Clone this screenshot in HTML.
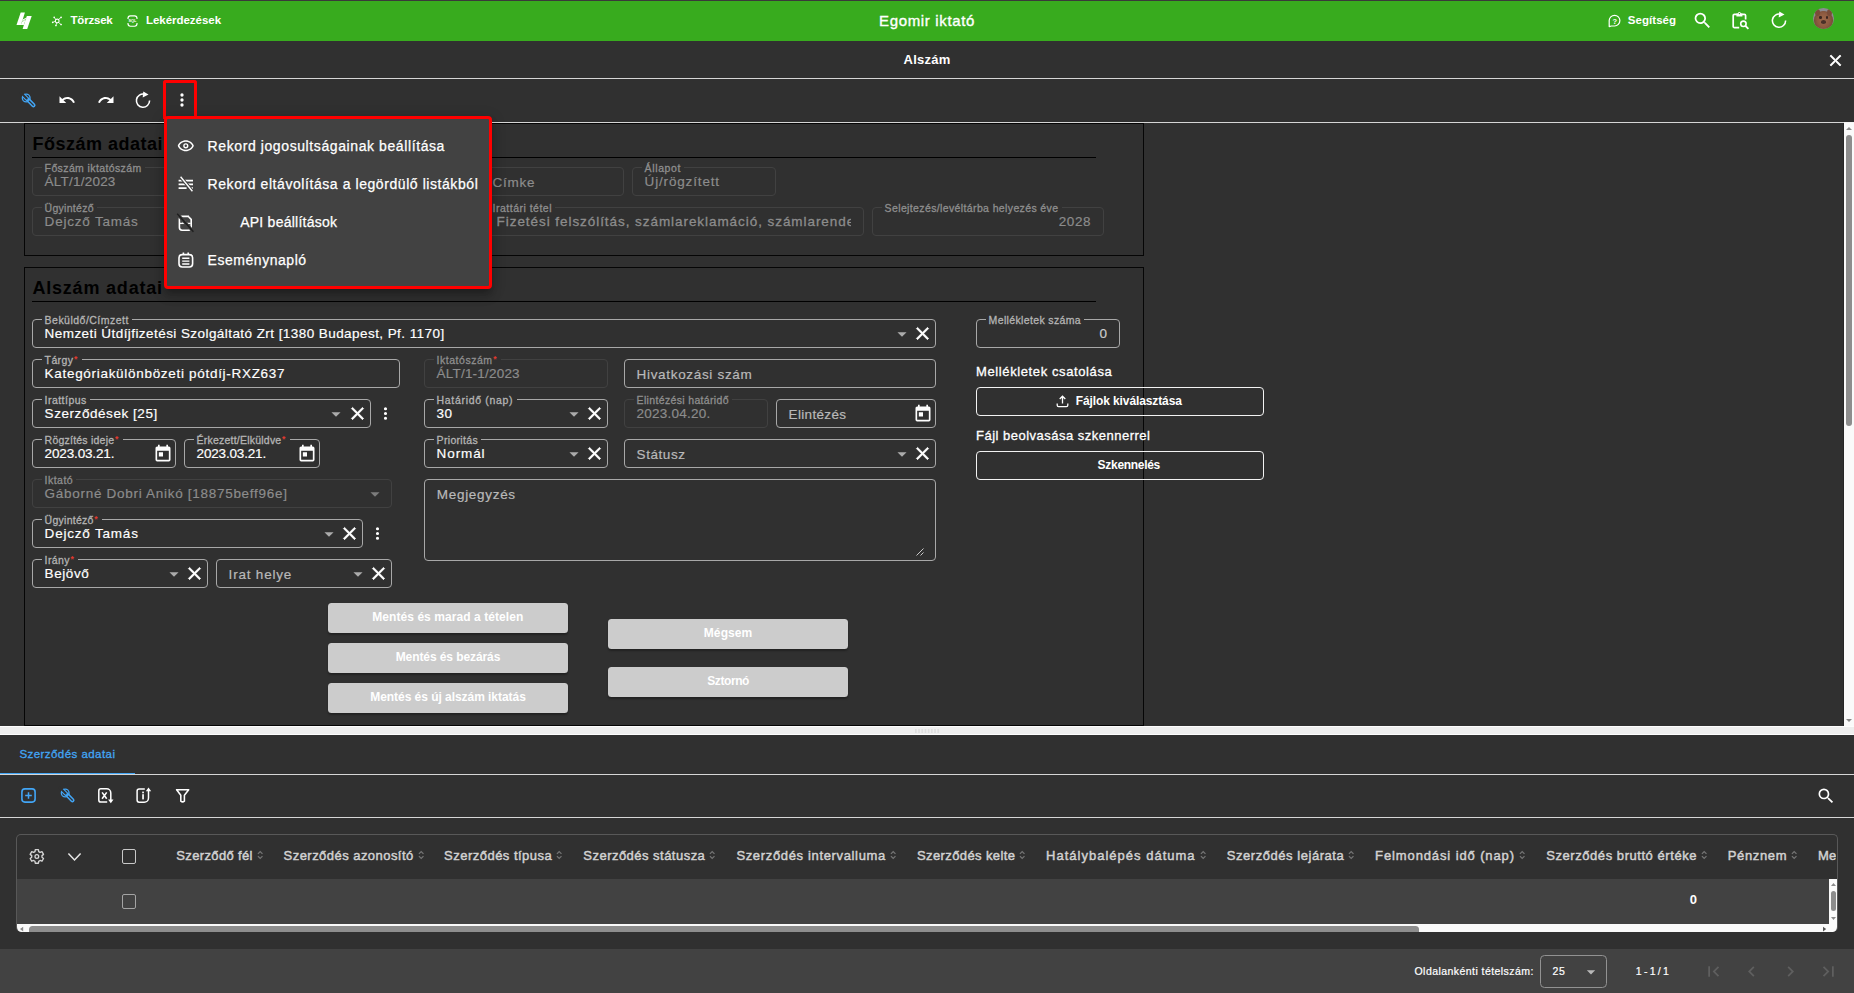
<!DOCTYPE html>
<html lang="hu"><head><meta charset="utf-8"><title>Egomir iktató</title>
<style>
html,body{margin:0;padding:0;}
body{width:1854px;height:993px;overflow:hidden;background:#303030;position:relative;font-family:"Liberation Sans",sans-serif;}
.t{position:absolute;white-space:nowrap;}
.f{position:absolute;box-sizing:border-box;border:1px solid #a8a8a8;border-radius:4px;}
.f.d{border-color:#414141;}
.btn{position:absolute;background:#cccccc;border-radius:3.5px;box-shadow:0 2px 2px rgba(0,0,0,.3);}
.ob{position:absolute;box-sizing:border-box;border:1px solid #f2f2f2;border-radius:4px;}
svg{overflow:visible}
</style></head><body>

<div style="position:absolute;left:0px;top:0px;width:1854px;height:1px;background:#3a3a3a"></div>
<div style="position:absolute;left:0px;top:1px;width:1854px;height:40px;background:#38ab1e"></div>
<svg style="position:absolute;left:0px;top:0px" width="40" height="40" viewBox="0 0 40 40"><path d="M20.7,12.5H24.9L21,25H16.5Z" fill="#fff"/><path d="M26.8,15.9H31.7L27.2,28.9H22.6Z" fill="#fff"/><path d="M22.7,19.4L26.4,17.4L23.8,25H20.9Z" fill="#fff"/><path d="M26.2,18.9L21.6,22" stroke="#38ab1e" stroke-width="0.5" opacity="0.8" fill="none"/></svg>
<svg style="position:absolute;left:50px;top:14px" width="14" height="14" viewBox="50 14 14 14"><circle cx="57.2" cy="21" r="1.9" fill="none" stroke="#fff" stroke-width="1.1"/><path d="M55.9,19.6L54.2,17.4M58.5,19.6L61,17.4M55.3,21.3L52.8,22.3M56.6,22.8L56,25.4M58.5,22.4L61,24.5" stroke="#fff" stroke-width="0.8" fill="none"/><circle cx="54.2" cy="17.3" r="0.85" fill="#fff"/><circle cx="61.1" cy="17.3" r="0.85" fill="#fff"/><circle cx="52.7" cy="22.3" r="0.85" fill="#fff"/><circle cx="55.95" cy="25.5" r="0.85" fill="#fff"/><circle cx="61.1" cy="24.5" r="0.85" fill="#fff"/></svg>
<div class="t" style="top:11.50px;font-size:11.5px;line-height:17px;color:#ffffff;left:70.50px;font-weight:700;letter-spacing:-0.208px;">Törzsek</div>
<svg style="position:absolute;left:127px;top:15px" width="11" height="12" viewBox="0 0 11 12"><path d="M1,4V3.2C1,1.9 2.1,0.8 3.4,0.8H7.6C8.9,0.8 10,1.9 10,3.2V4M1,8V8.8C1,10.1 2.1,11.2 3.4,11.2H7.6C8.9,11.2 10,10.1 10,8.8V8" fill="none" stroke="#fff" stroke-width="1.15"/><text x="5.5" y="7.4" font-size="3.9" font-weight="700" fill="#fff" text-anchor="middle" font-family="Liberation Sans, sans-serif">SQL</text></svg>
<div class="t" style="top:11.50px;font-size:11.5px;line-height:17px;color:#ffffff;left:146.00px;font-weight:700;letter-spacing:-0.036px;">Lekérdezések</div>
<div class="t" style="top:10.00px;font-size:15px;line-height:22px;color:#ffffff;left:879.00px;letter-spacing:0.652px;-webkit-text-stroke:0.35px #ffffff;">Egomir iktató</div>
<svg style="position:absolute;left:1608px;top:14px" width="13" height="14" viewBox="0 0 13 14"><path d="M1.2,12.6V6.6C1.2,3.6 3.6,1.3 6.6,1.3C9.5,1.3 11.9,3.6 11.9,6.6C11.9,9.6 9.5,12 6.6,12H3.4Z" fill="none" stroke="#fff" stroke-width="1.2" stroke-linejoin="round"/><text x="6.7" y="9.6" font-size="7.5" font-weight="700" fill="#fff" text-anchor="middle" font-family="Liberation Sans, sans-serif">?</text></svg>
<div class="t" style="top:11.50px;font-size:11.5px;line-height:17px;color:#ffffff;left:1627.70px;font-weight:700;letter-spacing:0.071px;">Segítség</div>
<svg style="position:absolute;left:1692px;top:10px" width="21" height="21" viewBox="0 0 24 24"><path d="M9.5,3A6.5,6.5 0 0,1 16,9.5C16,11.11 15.41,12.59 14.44,13.73L14.71,14H15.5L20.5,19L19,20.5L14,15.5V14.71L13.73,14.44C12.59,15.41 11.11,16 9.5,16A6.5,6.5 0 0,1 3,9.5A6.5,6.5 0 0,1 9.5,3M9.5,5C7,5 5,7 5,9.5C5,12 7,14 9.5,14C12,14 14,12 14,9.5C14,7 12,5 9.5,5Z" fill="#fff" /></svg>
<svg style="position:absolute;left:1731px;top:11px" width="19" height="19" viewBox="0 0 19 19"><path d="M8.2,16.6H3.4C2.7,16.6 2.2,16.1 2.2,15.4V4.6C2.2,3.9 2.7,3.4 3.4,3.4H13.4C14.1,3.4 14.6,3.9 14.6,4.6V8.4" fill="none" stroke="#fff" stroke-width="1.7"/><path d="M5.4,5.4V2.6H6.9C7,1.6 7.6,1 8.4,1C9.2,1 9.8,1.6 9.9,2.6H11.4V5.4Z" fill="#fff"/><circle cx="8.4" cy="2.5" r="0.7" fill="#38ab1e"/><circle cx="12.4" cy="12.8" r="2.7" fill="none" stroke="#fff" stroke-width="1.6"/><path d="M14.4,14.8L17.4,17.8" stroke="#fff" stroke-width="1.8"/></svg>
<svg style="position:absolute;left:1770.6px;top:11.4px" width="17.0" height="18.0" viewBox="0 0 17 18"><path d="M14.6,9.6A6.6,6.6 0 1 1 9.7,3.25" fill="none" stroke="#fff" stroke-width="1.55"/><path d="M8.3,0.5L13.5,3.5L7.7,6.5Z" fill="#fff"/></svg>
<div style="position:absolute;left:1813px;top:8px;width:21px;height:21px;border-radius:50%;overflow:hidden;background:#8d8b92"><div style="position:absolute;left:1px;top:3px;width:19px;height:20px;border-radius:45% 45% 50% 50%;background:radial-gradient(ellipse at 50% 45%,#a06a4c 0,#8d5a40 45%,#6e4736 80%,#5c3d30 100%)"></div><div style="position:absolute;left:2px;top:1px;width:5px;height:7px;border-radius:50%;background:#7a4c39"></div><div style="position:absolute;left:14px;top:1px;width:5px;height:7px;border-radius:50%;background:#7a4c39"></div><div style="position:absolute;left:6px;top:8px;width:2.5px;height:2.5px;border-radius:50%;background:#3a2620"></div><div style="position:absolute;left:12.5px;top:8px;width:2.5px;height:2.5px;border-radius:50%;background:#3a2620"></div><div style="position:absolute;left:8px;top:12px;width:5px;height:3.5px;border-radius:50%;background:#4a3028"></div></div>
<div class="t" style="top:49.50px;font-size:13px;line-height:20px;color:#ffffff;left:903.50px;font-weight:700;letter-spacing:0.247px;">Alszám</div>
<svg style="position:absolute;left:1825.5px;top:50.5px" width="19" height="19" viewBox="0 0 24 24"><path d="M19,6.41L17.59,5L12,10.59L6.41,5L5,6.41L10.59,12L5,17.59L6.41,19L12,13.41L17.59,19L19,17.59L13.41,12L19,6.41Z" fill="#fff" stroke="#fff" stroke-width="0.9"/></svg>
<div style="position:absolute;left:0px;top:78px;width:1854px;height:1px;background:#d6d6d6"></div>
<svg style="position:absolute;left:18px;top:90px" width="22" height="22" viewBox="18 90 22 22"><defs><clipPath id="wc1"><circle cx="26.2" cy="98" r="4.55"/></clipPath></defs><circle cx="26.2" cy="98" r="3.85" fill="none" stroke="#42a5f5" stroke-width="1.35"/><line x1="28.3" y1="100.1" x2="33.4" y2="105.2" stroke="#42a5f5" stroke-width="4.3" stroke-linecap="round"/><line x1="29.3" y1="101.1" x2="33.4" y2="105.2" stroke="#303030" stroke-width="1.25" stroke-linecap="round"/><g clip-path="url(#wc1)"><line x1="26.9" y1="98.7" x2="21" y2="92.8" stroke="#42a5f5" stroke-width="4.3" stroke-linecap="round"/></g><line x1="26.7" y1="98.5" x2="20.4" y2="92.2" stroke="#303030" stroke-width="2.0" stroke-linecap="round"/></svg>
<svg style="position:absolute;left:58.2px;top:91.25px" width="18" height="18" viewBox="0 0 24 24"><path d="M12.5,8C9.85,8 7.45,9 5.6,10.6L2,7V16H11L7.38,12.38C8.77,11.22 10.54,10.5 12.5,10.5C16.04,10.5 19.05,12.81 20.1,16L22.47,15.22C21.08,11.03 17.15,8 12.5,8Z" fill="#fff" /></svg>
<svg style="position:absolute;left:96.9px;top:91.25px" width="18" height="18" viewBox="0 0 24 24"><path d="M18.4,10.6C16.55,9 14.15,8 11.5,8C6.85,8 2.92,11.03 1.54,15.22L3.9,16C4.95,12.81 7.95,10.5 11.5,10.5C13.45,10.5 15.23,11.22 16.62,12.38L13,16H22V7L18.4,10.6Z" fill="#fff" /></svg>
<svg style="position:absolute;left:135px;top:91px" width="17.0" height="18.0" viewBox="0 0 17 18"><path d="M14.6,9.6A6.6,6.6 0 1 1 9.7,3.25" fill="none" stroke="#fff" stroke-width="1.55"/><path d="M8.3,0.5L13.5,3.5L7.7,6.5Z" fill="#fff"/></svg>
<svg style="position:absolute;left:172px;top:90px" width="20" height="20" viewBox="0 0 24 24"><path d="M12,16A2,2 0 0,1 14,18A2,2 0 0,1 12,20A2,2 0 0,1 10,18A2,2 0 0,1 12,16M12,10A2,2 0 0,1 14,12A2,2 0 0,1 12,14A2,2 0 0,1 10,12A2,2 0 0,1 12,10M12,4A2,2 0 0,1 14,6A2,2 0 0,1 12,8A2,2 0 0,1 10,6A2,2 0 0,1 12,4Z" fill="#fff" /></svg>
<div style="position:absolute;left:0px;top:122px;width:1844px;height:1px;background:#d6d6d6"></div>
<div style="position:absolute;left:1844px;top:122px;width:10px;height:1px;background:#f4f4f4"></div>
<div style="position:absolute;left:1843px;top:123px;width:1px;height:603px;background:#262626"></div>
<div style="position:absolute;left:1844px;top:123px;width:10px;height:603px;background:#fafafa"></div>
<svg style="position:absolute;left:1846px;top:127px" width="6" height="3" viewBox="0 0 6 3"><path d="M0,3L3,0L6,3Z" fill="#8a8a8a"/></svg>
<svg style="position:absolute;left:1846px;top:719px" width="6" height="3" viewBox="0 0 6 3"><path d="M0,0L3,3L6,0Z" fill="#8a8a8a"/></svg>
<div style="position:absolute;left:1846px;top:135px;width:6px;height:291px;background:#8d8d8d;border-radius:3px"></div>
<div style="position:absolute;left:24px;top:123px;width:1120px;height:133px;box-sizing:border-box;border:1px solid #050505"></div>
<div class="t" style="top:131.40px;font-size:18px;line-height:27px;color:#000;left:32.40px;font-weight:700;letter-spacing:0.498px;">Főszám adatai</div>
<div style="position:absolute;left:32px;top:157px;width:1064px;height:1px;background:#000"></div>
<div class="f d" style="left:32px;top:167px;width:144px;height:29px"></div>
<div style="position:absolute;left:41.5px;top:167px;width:103px;height:1px;background:#303030"></div>
<div class="t" style="top:160.10px;font-size:10.5px;line-height:16px;color:#8e8e8e;left:44.60px;letter-spacing:0.386px;-webkit-text-stroke:0.3px #8e8e8e;">Főszám iktatószám</div>
<div class="t" style="top:172.40px;font-size:13.5px;line-height:20px;color:#8c8c8c;left:44.60px;letter-spacing:0.221px;-webkit-text-stroke:0.18px #8c8c8c;">ÁLT/1/2023</div>
<div class="f d" style="left:480px;top:167px;width:144px;height:29px"></div>
<div class="t" style="top:173.30px;font-size:13.5px;line-height:20px;color:#8c8c8c;left:492.60px;letter-spacing:0.700px;-webkit-text-stroke:0.2px #8c8c8c;">Címke</div>
<div class="f d" style="left:632px;top:167px;width:144px;height:29px"></div>
<div style="position:absolute;left:641.5px;top:167px;width:42px;height:1px;background:#303030"></div>
<div class="t" style="top:160.10px;font-size:10.5px;line-height:16px;color:#8e8e8e;left:644.60px;letter-spacing:0.628px;-webkit-text-stroke:0.3px #8e8e8e;">Állapot</div>
<div class="t" style="top:172.40px;font-size:13.5px;line-height:20px;color:#8c8c8c;left:644.60px;letter-spacing:0.836px;-webkit-text-stroke:0.18px #8c8c8c;">Új/rögzített</div>
<div class="f d" style="left:32px;top:207px;width:440px;height:29px"></div>
<div style="position:absolute;left:41.5px;top:207px;width:55px;height:1px;background:#303030"></div>
<div class="t" style="top:200.10px;font-size:10.5px;line-height:16px;color:#8e8e8e;left:44.60px;letter-spacing:0.279px;-webkit-text-stroke:0.3px #8e8e8e;">Ügyintéző</div>
<div class="t" style="top:212.40px;font-size:13.5px;line-height:20px;color:#8c8c8c;left:44.60px;letter-spacing:0.789px;-webkit-text-stroke:0.18px #8c8c8c;">Dejcző Tamás</div>
<div class="f d" style="left:480px;top:207px;width:384px;height:29px"></div>
<div style="position:absolute;left:489.5px;top:207px;width:65px;height:1px;background:#303030"></div>
<div class="t" style="top:200.10px;font-size:10.5px;line-height:16px;color:#8e8e8e;left:492.60px;letter-spacing:0.492px;-webkit-text-stroke:0.3px #8e8e8e;">Irattári tétel</div>
<div class="t" style="left:496.6px;top:212.4px;width:354.5px;overflow:hidden;font-size:13.5px;line-height:20px;color:#8c8c8c;letter-spacing:.94px;-webkit-text-stroke:.3px #8c8c8c">Fizetési felszólítás, számlareklamáció, számlarendezés</div>
<div class="f d" style="left:872px;top:207px;width:232px;height:29px"></div>
<div style="position:absolute;left:881.5px;top:207px;width:180px;height:1px;background:#303030"></div>
<div class="t" style="top:200.10px;font-size:10.5px;line-height:16px;color:#8e8e8e;left:884.60px;letter-spacing:0.374px;-webkit-text-stroke:0.3px #8e8e8e;">Selejtezés/levéltárba helyezés éve</div>
<div class="t" style="top:212.40px;font-size:13.5px;line-height:20px;color:#8c8c8c;left:1058.80px;letter-spacing:0.543px;-webkit-text-stroke:0.18px #8c8c8c;">2028</div>
<div style="position:absolute;left:24px;top:267px;width:1120px;height:459px;box-sizing:border-box;border:1px solid #050505"></div>
<div class="t" style="top:275.30px;font-size:18px;line-height:27px;color:#000;left:32.40px;font-weight:700;letter-spacing:0.804px;">Alszám adatai</div>
<div style="position:absolute;left:32px;top:301px;width:1064px;height:1px;background:#000"></div>
<div class="f" style="left:32px;top:319px;width:904px;height:29px"></div>
<div style="position:absolute;left:41.5px;top:319px;width:90px;height:1px;background:#303030"></div>
<div class="t" style="top:312.10px;font-size:10.5px;line-height:16px;color:#b4b4b4;left:44.60px;letter-spacing:0.478px;-webkit-text-stroke:0.3px #b4b4b4;">Beküldő/Címzett</div>
<div class="t" style="top:324.40px;font-size:13.5px;line-height:20px;color:#ffffff;left:44.60px;letter-spacing:0.434px;-webkit-text-stroke:0.18px #ffffff;">Nemzeti Útdíjfizetési Szolgáltató Zrt [1380 Budapest, Pf. 1170]</div>
<svg style="position:absolute;left:891px;top:322.9px" width="22" height="22" viewBox="0 0 24 24"><path d="M7,10L12,15L17,10H7Z" fill="#ababab" /></svg>
<svg style="position:absolute;left:911.5px;top:323.1px" width="21" height="21" viewBox="0 0 24 24"><path d="M19,6.41L17.59,5L12,10.59L6.41,5L5,6.41L10.59,12L5,17.59L6.41,19L12,13.41L17.59,19L19,17.59L13.41,12L19,6.41Z" fill="#ffffff" stroke="#fff" stroke-width="0.8"/></svg>
<div class="f" style="left:976px;top:319px;width:144px;height:29px"></div>
<div style="position:absolute;left:985.5px;top:319px;width:98px;height:1px;background:#303030"></div>
<div class="t" style="top:312.10px;font-size:10.5px;line-height:16px;color:#b4b4b4;left:988.60px;letter-spacing:0.355px;-webkit-text-stroke:0.3px #b4b4b4;">Mellékletek száma</div>
<div class="t" style="top:324.40px;font-size:13.5px;line-height:20px;color:#cdcdcd;left:1099.49px;-webkit-text-stroke:0.18px #cdcdcd;">0</div>
<div class="f" style="left:32px;top:359px;width:368px;height:29px"></div>
<div style="position:absolute;left:41.5px;top:359px;width:40px;height:1px;background:#303030"></div>
<div class="t" style="top:352.10px;font-size:10.5px;line-height:16px;color:#b4b4b4;left:44.60px;letter-spacing:0.373px;-webkit-text-stroke:0.3px #b4b4b4;">Tárgy</div>
<div class="t" style="top:352.60px;font-size:8.5px;line-height:13px;color:#e0392f;left:73.90px;font-weight:700;">*</div>
<div class="t" style="top:364.40px;font-size:13.5px;line-height:20px;color:#ffffff;left:44.60px;letter-spacing:0.698px;-webkit-text-stroke:0.18px #ffffff;">Kategóriakülönbözeti pótdíj-RXZ637</div>
<div class="f d" style="left:424px;top:359px;width:184px;height:29px"></div>
<div style="position:absolute;left:433.5px;top:359px;width:67px;height:1px;background:#303030"></div>
<div class="t" style="top:352.10px;font-size:10.5px;line-height:16px;color:#8e8e8e;left:436.60px;letter-spacing:0.524px;-webkit-text-stroke:0.3px #8e8e8e;">Iktatószám</div>
<div class="t" style="top:352.60px;font-size:8.5px;line-height:13px;color:#e0392f;left:493.20px;font-weight:700;">*</div>
<div class="t" style="top:364.40px;font-size:13.5px;line-height:20px;color:#8c8c8c;left:436.60px;letter-spacing:0.200px;-webkit-text-stroke:0.18px #8c8c8c;">ÁLT/1-1/2023</div>
<div class="f" style="left:624px;top:359px;width:312px;height:29px"></div>
<div class="t" style="top:365.30px;font-size:13.5px;line-height:20px;color:#b9b9b9;left:636.60px;letter-spacing:0.674px;-webkit-text-stroke:0.2px #b9b9b9;">Hivatkozási szám</div>
<div class="f" style="left:32px;top:399px;width:339px;height:29px"></div>
<div style="position:absolute;left:41.5px;top:399px;width:48px;height:1px;background:#303030"></div>
<div class="t" style="top:392.10px;font-size:10.5px;line-height:16px;color:#b4b4b4;left:44.60px;letter-spacing:0.463px;-webkit-text-stroke:0.3px #b4b4b4;">Irattípus</div>
<div class="t" style="top:404.40px;font-size:13.5px;line-height:20px;color:#ffffff;left:44.60px;letter-spacing:0.556px;-webkit-text-stroke:0.18px #ffffff;">Szerződések [25]</div>
<svg style="position:absolute;left:325px;top:402.9px" width="22" height="22" viewBox="0 0 24 24"><path d="M7,10L12,15L17,10H7Z" fill="#ababab" /></svg>
<svg style="position:absolute;left:346.5px;top:403.1px" width="21" height="21" viewBox="0 0 24 24"><path d="M19,6.41L17.59,5L12,10.59L6.41,5L5,6.41L10.59,12L5,17.59L6.41,19L12,13.41L17.59,19L19,17.59L13.41,12L19,6.41Z" fill="#ffffff" stroke="#fff" stroke-width="0.8"/></svg>
<svg style="position:absolute;left:376.0px;top:404.0px" width="19" height="19" viewBox="0 0 24 24"><path d="M12,16A2,2 0 0,1 14,18A2,2 0 0,1 12,20A2,2 0 0,1 10,18A2,2 0 0,1 12,16M12,10A2,2 0 0,1 14,12A2,2 0 0,1 12,14A2,2 0 0,1 10,12A2,2 0 0,1 12,10M12,4A2,2 0 0,1 14,6A2,2 0 0,1 12,8A2,2 0 0,1 10,6A2,2 0 0,1 12,4Z" fill="#ffffff" /></svg>
<div class="f" style="left:424px;top:399px;width:184px;height:29px"></div>
<div style="position:absolute;left:433.5px;top:399px;width:83px;height:1px;background:#303030"></div>
<div class="t" style="top:392.10px;font-size:10.5px;line-height:16px;color:#b4b4b4;left:436.60px;letter-spacing:0.678px;-webkit-text-stroke:0.3px #b4b4b4;">Határidő (nap)</div>
<div class="t" style="top:404.40px;font-size:13.5px;line-height:20px;color:#ffffff;left:436.60px;letter-spacing:0.493px;-webkit-text-stroke:0.18px #ffffff;">30</div>
<svg style="position:absolute;left:562.8px;top:402.9px" width="22" height="22" viewBox="0 0 24 24"><path d="M7,10L12,15L17,10H7Z" fill="#ababab" /></svg>
<svg style="position:absolute;left:583.5px;top:403.1px" width="21" height="21" viewBox="0 0 24 24"><path d="M19,6.41L17.59,5L12,10.59L6.41,5L5,6.41L10.59,12L5,17.59L6.41,19L12,13.41L17.59,19L19,17.59L13.41,12L19,6.41Z" fill="#ffffff" stroke="#fff" stroke-width="0.8"/></svg>
<div class="f d" style="left:624px;top:399px;width:144px;height:29px"></div>
<div style="position:absolute;left:633.5px;top:399px;width:98px;height:1px;background:#303030"></div>
<div class="t" style="top:392.10px;font-size:10.5px;line-height:16px;color:#8e8e8e;left:636.60px;letter-spacing:0.342px;-webkit-text-stroke:0.3px #8e8e8e;">Elintézési határidő</div>
<div class="t" style="top:404.40px;font-size:13.5px;line-height:20px;color:#8c8c8c;left:636.60px;letter-spacing:0.226px;-webkit-text-stroke:0.18px #8c8c8c;">2023.04.20.</div>
<div class="f" style="left:776px;top:399px;width:160px;height:29px"></div>
<div class="t" style="top:405.30px;font-size:13.5px;line-height:20px;color:#b9b9b9;left:788.60px;letter-spacing:0.325px;-webkit-text-stroke:0.2px #b9b9b9;">Elintézés</div>
<svg style="position:absolute;left:912.7px;top:403.90000000000003px" width="20" height="20" viewBox="0 0 24 24"><path d="M7,10H12V15H7M19,19H5V8H19M19,3H18V1H16V3H8V1H6V3H5C3.89,3 3,3.9 3,5V19A2,2 0 0,0 5,21H19A2,2 0 0,0 21,19V5A2,2 0 0,0 19,3Z" fill="#ffffff" /></svg>
<div class="f" style="left:32px;top:439px;width:144px;height:29px"></div>
<div style="position:absolute;left:41.5px;top:439px;width:81px;height:1px;background:#303030"></div>
<div class="t" style="top:432.10px;font-size:10.5px;line-height:16px;color:#b4b4b4;left:44.60px;letter-spacing:0.226px;-webkit-text-stroke:0.3px #b4b4b4;">Rögzítés ideje</div>
<div class="t" style="top:432.60px;font-size:8.5px;line-height:13px;color:#e0392f;left:114.90px;font-weight:700;">*</div>
<div class="t" style="top:444.40px;font-size:13.5px;line-height:20px;color:#ffffff;left:44.60px;letter-spacing:-0.146px;-webkit-text-stroke:0.18px #ffffff;">2023.03.21.</div>
<svg style="position:absolute;left:152.6px;top:443.90000000000003px" width="20" height="20" viewBox="0 0 24 24"><path d="M7,10H12V15H7M19,19H5V8H19M19,3H18V1H16V3H8V1H6V3H5C3.89,3 3,3.9 3,5V19A2,2 0 0,0 5,21H19A2,2 0 0,0 21,19V5A2,2 0 0,0 19,3Z" fill="#ffffff" /></svg>
<div class="f" style="left:184px;top:439px;width:136px;height:29px"></div>
<div style="position:absolute;left:193.5px;top:439px;width:96px;height:1px;background:#303030"></div>
<div class="t" style="top:432.10px;font-size:10.5px;line-height:16px;color:#b4b4b4;left:196.60px;letter-spacing:0.217px;-webkit-text-stroke:0.3px #b4b4b4;">Érkezett/Elküldve</div>
<div class="t" style="top:432.60px;font-size:8.5px;line-height:13px;color:#e0392f;left:282.00px;font-weight:700;">*</div>
<div class="t" style="top:444.40px;font-size:13.5px;line-height:20px;color:#ffffff;left:196.60px;letter-spacing:-0.174px;-webkit-text-stroke:0.18px #ffffff;">2023.03.21.</div>
<svg style="position:absolute;left:296.6px;top:443.90000000000003px" width="20" height="20" viewBox="0 0 24 24"><path d="M7,10H12V15H7M19,19H5V8H19M19,3H18V1H16V3H8V1H6V3H5C3.89,3 3,3.9 3,5V19A2,2 0 0,0 5,21H19A2,2 0 0,0 21,19V5A2,2 0 0,0 19,3Z" fill="#ffffff" /></svg>
<div class="f" style="left:424px;top:439px;width:184px;height:29px"></div>
<div style="position:absolute;left:433.5px;top:439px;width:47px;height:1px;background:#303030"></div>
<div class="t" style="top:432.10px;font-size:10.5px;line-height:16px;color:#b4b4b4;left:436.60px;letter-spacing:0.321px;-webkit-text-stroke:0.3px #b4b4b4;">Prioritás</div>
<div class="t" style="top:444.40px;font-size:13.5px;line-height:20px;color:#ffffff;left:436.60px;letter-spacing:0.899px;-webkit-text-stroke:0.18px #ffffff;">Normál</div>
<svg style="position:absolute;left:562.8px;top:442.9px" width="22" height="22" viewBox="0 0 24 24"><path d="M7,10L12,15L17,10H7Z" fill="#ababab" /></svg>
<svg style="position:absolute;left:583.5px;top:443.1px" width="21" height="21" viewBox="0 0 24 24"><path d="M19,6.41L17.59,5L12,10.59L6.41,5L5,6.41L10.59,12L5,17.59L6.41,19L12,13.41L17.59,19L19,17.59L13.41,12L19,6.41Z" fill="#ffffff" stroke="#fff" stroke-width="0.8"/></svg>
<div class="f" style="left:624px;top:439px;width:312px;height:29px"></div>
<div class="t" style="top:445.30px;font-size:13.5px;line-height:20px;color:#b9b9b9;left:636.60px;letter-spacing:0.554px;-webkit-text-stroke:0.2px #b9b9b9;">Státusz</div>
<svg style="position:absolute;left:891px;top:442.9px" width="22" height="22" viewBox="0 0 24 24"><path d="M7,10L12,15L17,10H7Z" fill="#ababab" /></svg>
<svg style="position:absolute;left:911.5px;top:443.1px" width="21" height="21" viewBox="0 0 24 24"><path d="M19,6.41L17.59,5L12,10.59L6.41,5L5,6.41L10.59,12L5,17.59L6.41,19L12,13.41L17.59,19L19,17.59L13.41,12L19,6.41Z" fill="#ffffff" stroke="#fff" stroke-width="0.8"/></svg>
<div class="f d" style="left:32px;top:479px;width:360px;height:29px"></div>
<div style="position:absolute;left:41.5px;top:479px;width:34px;height:1px;background:#303030"></div>
<div class="t" style="top:472.10px;font-size:10.5px;line-height:16px;color:#8e8e8e;left:44.60px;letter-spacing:0.470px;-webkit-text-stroke:0.3px #8e8e8e;">Iktató</div>
<div class="t" style="top:484.40px;font-size:13.5px;line-height:20px;color:#8c8c8c;left:44.60px;letter-spacing:0.709px;-webkit-text-stroke:0.18px #8c8c8c;">Gáborné Dobri Anikó [18875beff96e]</div>
<svg style="position:absolute;left:364px;top:482.9px" width="22" height="22" viewBox="0 0 24 24"><path d="M7,10L12,15L17,10H7Z" fill="#7c7c7c" /></svg>
<div class="f" style="left:424px;top:479px;width:512px;height:82px"></div>
<div class="t" style="top:484.50px;font-size:13.5px;line-height:20px;color:#b9b9b9;left:436.80px;letter-spacing:0.697px;-webkit-text-stroke:0.2px #b9b9b9;">Megjegyzés</div>
<svg style="position:absolute;left:916px;top:548px" width="8" height="8" viewBox="0 0 8 8"><path d="M7.5,0.5L0.5,7.5M7.5,4.5L4.5,7.5" stroke="#c8c8c8" stroke-width="1" fill="none"/></svg>
<div class="f" style="left:32px;top:519px;width:331px;height:29px"></div>
<div style="position:absolute;left:41.5px;top:519px;width:60px;height:1px;background:#303030"></div>
<div class="t" style="top:512.10px;font-size:10.5px;line-height:16px;color:#b4b4b4;left:44.60px;letter-spacing:0.257px;-webkit-text-stroke:0.3px #b4b4b4;">Ügyintéző</div>
<div class="t" style="top:512.60px;font-size:8.5px;line-height:13px;color:#e0392f;left:94.20px;font-weight:700;">*</div>
<div class="t" style="top:524.40px;font-size:13.5px;line-height:20px;color:#ffffff;left:44.60px;letter-spacing:0.798px;-webkit-text-stroke:0.18px #ffffff;">Dejcző Tamás</div>
<svg style="position:absolute;left:317.9px;top:522.9px" width="22" height="22" viewBox="0 0 24 24"><path d="M7,10L12,15L17,10H7Z" fill="#ababab" /></svg>
<svg style="position:absolute;left:338.8px;top:523.1px" width="21" height="21" viewBox="0 0 24 24"><path d="M19,6.41L17.59,5L12,10.59L6.41,5L5,6.41L10.59,12L5,17.59L6.41,19L12,13.41L17.59,19L19,17.59L13.41,12L19,6.41Z" fill="#ffffff" stroke="#fff" stroke-width="0.8"/></svg>
<svg style="position:absolute;left:367.9px;top:524.2px" width="19" height="19" viewBox="0 0 24 24"><path d="M12,16A2,2 0 0,1 14,18A2,2 0 0,1 12,20A2,2 0 0,1 10,18A2,2 0 0,1 12,16M12,10A2,2 0 0,1 14,12A2,2 0 0,1 12,14A2,2 0 0,1 10,12A2,2 0 0,1 12,10M12,4A2,2 0 0,1 14,6A2,2 0 0,1 12,8A2,2 0 0,1 10,6A2,2 0 0,1 12,4Z" fill="#ffffff" /></svg>
<div class="f" style="left:32px;top:559px;width:176px;height:29px"></div>
<div style="position:absolute;left:41.5px;top:559px;width:36px;height:1px;background:#303030"></div>
<div class="t" style="top:552.10px;font-size:10.5px;line-height:16px;color:#b4b4b4;left:44.60px;letter-spacing:0.392px;-webkit-text-stroke:0.3px #b4b4b4;">Irány</div>
<div class="t" style="top:552.60px;font-size:8.5px;line-height:13px;color:#e0392f;left:70.50px;font-weight:700;">*</div>
<div class="t" style="top:564.40px;font-size:13.5px;line-height:20px;color:#ffffff;left:44.60px;letter-spacing:0.571px;-webkit-text-stroke:0.18px #ffffff;">Bejövő</div>
<svg style="position:absolute;left:162.7px;top:562.9px" width="22" height="22" viewBox="0 0 24 24"><path d="M7,10L12,15L17,10H7Z" fill="#ababab" /></svg>
<svg style="position:absolute;left:183.9px;top:563.1px" width="21" height="21" viewBox="0 0 24 24"><path d="M19,6.41L17.59,5L12,10.59L6.41,5L5,6.41L10.59,12L5,17.59L6.41,19L12,13.41L17.59,19L19,17.59L13.41,12L19,6.41Z" fill="#ffffff" stroke="#fff" stroke-width="0.8"/></svg>
<div class="f" style="left:216px;top:559px;width:176px;height:29px"></div>
<div class="t" style="top:565.30px;font-size:13.5px;line-height:20px;color:#b9b9b9;left:228.60px;letter-spacing:0.797px;-webkit-text-stroke:0.2px #b9b9b9;">Irat helye</div>
<svg style="position:absolute;left:346.8px;top:562.9px" width="22" height="22" viewBox="0 0 24 24"><path d="M7,10L12,15L17,10H7Z" fill="#ababab" /></svg>
<svg style="position:absolute;left:367.5px;top:563.1px" width="21" height="21" viewBox="0 0 24 24"><path d="M19,6.41L17.59,5L12,10.59L6.41,5L5,6.41L10.59,12L5,17.59L6.41,19L12,13.41L17.59,19L19,17.59L13.41,12L19,6.41Z" fill="#ffffff" stroke="#fff" stroke-width="0.8"/></svg>
<div class="t" style="top:362.00px;font-size:13px;line-height:20px;color:#ffffff;left:976.00px;letter-spacing:0.612px;-webkit-text-stroke:0.3px #ffffff;">Mellékletek csatolása</div>
<div class="ob" style="left:976px;top:387px;width:288px;height:29px"></div>
<svg style="position:absolute;left:1056px;top:395px" width="13" height="13" viewBox="0 0 13 13"><path d="M6.5,8.6V1.4M3.7,4L6.5,1.2L9.3,4M1.2,8.4V10.2C1.2,11 1.8,11.6 2.6,11.6H10.4C11.2,11.6 11.8,11 11.8,10.2V8.4" fill="none" stroke="#fff" stroke-width="1.3"/></svg>
<div class="t" style="top:392.00px;font-size:12px;line-height:18px;color:#ffffff;left:1075.80px;font-weight:700;letter-spacing:-0.108px;">Fájlok kiválasztása</div>
<div class="t" style="top:426.00px;font-size:13px;line-height:20px;color:#ffffff;left:976.00px;letter-spacing:0.492px;-webkit-text-stroke:0.3px #ffffff;">Fájl beolvasása szkennerrel</div>
<div class="ob" style="left:976px;top:451px;width:288px;height:29px"></div>
<div class="t" style="top:456.10px;font-size:12px;line-height:18px;color:#ffffff;left:1097.60px;font-weight:700;letter-spacing:-0.296px;">Szkennelés</div>
<div class="btn" style="left:328px;top:603px;width:240px;height:30px"></div>
<div class="t" style="top:608.40px;font-size:12px;line-height:18px;color:#ffffff;left:372.20px;font-weight:700;letter-spacing:0.073px;">Mentés és marad a tételen</div>
<div class="btn" style="left:328px;top:643px;width:240px;height:30px"></div>
<div class="t" style="top:648.40px;font-size:12px;line-height:18px;color:#ffffff;left:395.70px;font-weight:700;letter-spacing:-0.085px;">Mentés és bezárás</div>
<div class="btn" style="left:328px;top:683px;width:240px;height:30px"></div>
<div class="t" style="top:688.40px;font-size:12px;line-height:18px;color:#ffffff;left:370.20px;font-weight:700;letter-spacing:-0.042px;">Mentés és új alszám iktatás</div>
<div class="btn" style="left:608px;top:619px;width:240px;height:30px"></div>
<div class="t" style="top:624.40px;font-size:12px;line-height:18px;color:#ffffff;left:703.80px;font-weight:700;letter-spacing:0.081px;">Mégsem</div>
<div class="btn" style="left:608px;top:667px;width:240px;height:30px"></div>
<div class="t" style="top:672.40px;font-size:12px;line-height:18px;color:#ffffff;left:707.20px;font-weight:700;letter-spacing:-0.408px;">Sztornó</div>
<div style="position:absolute;left:0px;top:726px;width:1854px;height:9px;background:#eeeeee;box-sizing:border-box;border-top:1px solid #fdfdfd;border-bottom:1px solid #fdfdfd"></div>
<svg style="position:absolute;left:914.8px;top:729px" width="26" height="4" viewBox="0 0 26 4"><rect x="0.0" y="0" width="1.7" height="4" fill="#dedede"/><rect x="3.2" y="0" width="1.7" height="4" fill="#dedede"/><rect x="6.4" y="0" width="1.7" height="4" fill="#dedede"/><rect x="9.6" y="0" width="1.7" height="4" fill="#dedede"/><rect x="12.8" y="0" width="1.7" height="4" fill="#dedede"/><rect x="16.0" y="0" width="1.7" height="4" fill="#dedede"/><rect x="19.2" y="0" width="1.7" height="4" fill="#dedede"/><rect x="22.4" y="0" width="1.7" height="4" fill="#dedede"/></svg>
<div class="t" style="top:745.70px;font-size:11.5px;line-height:17px;color:#42a5f5;left:19.40px;letter-spacing:0.447px;-webkit-text-stroke:0.3px #42a5f5;">Szerződés adatai</div>
<div style="position:absolute;left:0px;top:774px;width:1854px;height:1px;background:#d6d6d6"></div>
<div style="position:absolute;left:0px;top:772.5px;width:134.8px;height:1.5px;background:#42a5f5"></div>
<svg style="position:absolute;left:21px;top:788px" width="15" height="15" viewBox="0 0 15 15"><rect x="0.9" y="0.9" width="13.2" height="13.2" rx="3" fill="none" stroke="#42a5f5" stroke-width="1.6"/><path d="M7.5,4.2V10.8M4.2,7.5H10.8" stroke="#42a5f5" stroke-width="1.5" fill="none"/></svg>
<svg style="position:absolute;left:57.3px;top:785.1px" width="22" height="22" viewBox="18 90 22 22"><defs><clipPath id="wc2"><circle cx="26.2" cy="98" r="4.55"/></clipPath></defs><circle cx="26.2" cy="98" r="3.85" fill="none" stroke="#42a5f5" stroke-width="1.35"/><line x1="28.3" y1="100.1" x2="33.4" y2="105.2" stroke="#42a5f5" stroke-width="4.3" stroke-linecap="round"/><line x1="29.3" y1="101.1" x2="33.4" y2="105.2" stroke="#303030" stroke-width="1.25" stroke-linecap="round"/><g clip-path="url(#wc2)"><line x1="26.9" y1="98.7" x2="21" y2="92.8" stroke="#42a5f5" stroke-width="4.3" stroke-linecap="round"/></g><line x1="26.7" y1="98.5" x2="20.4" y2="92.2" stroke="#303030" stroke-width="2.0" stroke-linecap="round"/></svg>
<svg style="position:absolute;left:96px;top:786px" width="20" height="20" viewBox="96 786 20 20"><path d="M107.2,802.1H100.9C99.7,802.1 98.8,801.2 98.8,800V790.9C98.8,789.7 99.7,788.8 100.9,788.8H106.6C108.9,788.8 110.8,790.7 110.8,793V801.4" fill="none" stroke="#fff" stroke-width="1.5"/><path d="M108.1,799.6H113.5L110.8,803.2Z" fill="#fff"/><path d="M102.1,792.4L106.7,798.8M106.7,792.4L102.1,798.8" stroke="#fff" stroke-width="1.6" fill="none"/></svg>
<svg style="position:absolute;left:134px;top:786px" width="20" height="20" viewBox="134 786 20 20"><path d="M144.8,789.1H139.2C138,789.1 137.1,790 137.1,791.2V800.1C137.1,801.3 138,802.2 139.2,802.2H144.2C146.6,802.2 148.5,800.3 148.5,797.9V789.6" fill="none" stroke="#fff" stroke-width="1.5"/><path d="M145.8,791.2H151.2L148.5,787.6Z" fill="#fff"/><rect x="142.2" y="794.2" width="1.7" height="5.2" fill="#fff"/><rect x="142.2" y="791.6" width="1.7" height="1.7" fill="#fff"/></svg>
<svg style="position:absolute;left:173px;top:786px" width="20" height="20" viewBox="173 786 20 20"><path d="M176.6,789.7H188.7L184.4,795.3V801.2Q182.6,802.6 180.8,801.2V795.3Z" fill="none" stroke="#fff" stroke-width="1.55" stroke-linejoin="round"/></svg>
<svg style="position:absolute;left:1815.5px;top:785.5px" width="20" height="20" viewBox="0 0 24 24"><path d="M9.5,3A6.5,6.5 0 0,1 16,9.5C16,11.11 15.41,12.59 14.44,13.73L14.71,14H15.5L20.5,19L19,20.5L14,15.5V14.71L13.73,14.44C12.59,15.41 11.11,16 9.5,16A6.5,6.5 0 0,1 3,9.5A6.5,6.5 0 0,1 9.5,3M9.5,5C7,5 5,7 5,9.5C5,12 7,14 9.5,14C12,14 14,12 14,9.5C14,7 12,5 9.5,5Z" fill="#fff" /></svg>
<div style="position:absolute;left:0px;top:817px;width:1854px;height:1px;background:#d6d6d6"></div>
<div style="position:absolute;left:16px;top:834px;width:1822px;height:98.4px;box-sizing:border-box;border:1px solid #585858;border-bottom:none;border-radius:5px;overflow:hidden"><div style="position:absolute;left:0;top:43.5px;width:1820px;height:45px;background:#424242"></div><div style="position:absolute;left:0;top:88.5px;width:1820px;height:9px;background:#fafafa"></div><div style="position:absolute;left:1812px;top:43.5px;width:8px;height:46px;background:#fafafa"></div><div style="position:absolute;left:12.2px;top:90.9px;width:1390px;height:9px;border-radius:3.5px;background:#8d8d8d"></div><div style="position:absolute;left:1814.3px;top:56.3px;width:5.2px;height:19.3px;border-radius:3px;background:#8d8d8d"></div></div>
<svg style="position:absolute;left:20px;top:926.2px" width="3.2" height="6.2" viewBox="0 0 4 6"><path d="M4,0L0,3L4,6Z" fill="#8a8a8a"/></svg>
<svg style="position:absolute;left:1822.8px;top:926.0px" width="3.2" height="6.2" viewBox="0 0 4 6"><path d="M0,0L4,3L0,6Z" fill="#555"/></svg>
<svg style="position:absolute;left:1831.3px;top:883px" width="5" height="3" viewBox="0 0 5 3"><path d="M0,3L2.5,0L5,3Z" fill="#8a8a8a"/></svg>
<svg style="position:absolute;left:1831.3px;top:917px" width="5" height="3" viewBox="0 0 5 3"><path d="M0,0L2.5,3L5,0Z" fill="#8a8a8a"/></svg>
<svg style="position:absolute;left:28px;top:848px" width="18" height="18" viewBox="28 848 18 18"><path d="M34.99,851.60L35.28,849.63L38.42,849.63L38.71,851.60L40.12,852.41L41.97,851.68L43.54,854.40L41.99,855.64L41.99,857.26L43.54,858.50L41.97,861.22L40.12,860.49L38.71,861.30L38.42,863.27L35.28,863.27L34.99,861.30L33.58,860.49L31.73,861.22L30.16,858.50L31.71,857.26L31.71,855.64L30.16,854.40L31.73,851.68L33.58,852.41Z" fill="none" stroke="#d4d4d4" stroke-width="1.35" stroke-linejoin="round"/><circle cx="36.85" cy="856.45" r="1.85" fill="none" stroke="#d4d4d4" stroke-width="1.3"/></svg>
<svg style="position:absolute;left:67px;top:851.7px" width="15" height="10" viewBox="0 0 15 10"><path d="M1.4,1.6L7.5,8L13.6,1.6" fill="none" stroke="#e6e6e6" stroke-width="1.5"/></svg>
<div style="position:absolute;left:122px;top:849px;width:14px;height:15px;box-sizing:border-box;border:1px solid #c8c8c8;border-radius:2px"></div>
<div style="position:absolute;left:122px;top:893.5px;width:14px;height:15px;box-sizing:border-box;border:1px solid #a4a4a4;border-radius:2px"></div>
<div class="t" style="top:845.60px;font-size:13px;line-height:20px;color:#d2d2d2;left:176.30px;letter-spacing:0.354px;-webkit-text-stroke:0.45px #d2d2d2;">Szerződő fél</div>
<svg style="position:absolute;left:256.7px;top:849.7px" width="6.4" height="10" viewBox="0 0 7 10"><path d="M1,3.7L3.5,1.2L6,3.7M1,6.3L3.5,8.8L6,6.3" fill="none" stroke="#757575" stroke-width="1.35"/></svg>
<div class="t" style="top:845.60px;font-size:13px;line-height:20px;color:#d2d2d2;left:283.60px;letter-spacing:0.458px;-webkit-text-stroke:0.45px #d2d2d2;">Szerződés azonosító</div>
<svg style="position:absolute;left:417.59999999999997px;top:849.7px" width="6.4" height="10" viewBox="0 0 7 10"><path d="M1,3.7L3.5,1.2L6,3.7M1,6.3L3.5,8.8L6,6.3" fill="none" stroke="#757575" stroke-width="1.35"/></svg>
<div class="t" style="top:845.60px;font-size:13px;line-height:20px;color:#d2d2d2;left:444.10px;letter-spacing:0.479px;-webkit-text-stroke:0.45px #d2d2d2;">Szerződés típusa</div>
<svg style="position:absolute;left:556.1px;top:849.7px" width="6.4" height="10" viewBox="0 0 7 10"><path d="M1,3.7L3.5,1.2L6,3.7M1,6.3L3.5,8.8L6,6.3" fill="none" stroke="#757575" stroke-width="1.35"/></svg>
<div class="t" style="top:845.60px;font-size:13px;line-height:20px;color:#d2d2d2;left:583.30px;letter-spacing:0.476px;-webkit-text-stroke:0.45px #d2d2d2;">Szerződés státusza</div>
<svg style="position:absolute;left:709.1999999999999px;top:849.7px" width="6.4" height="10" viewBox="0 0 7 10"><path d="M1,3.7L3.5,1.2L6,3.7M1,6.3L3.5,8.8L6,6.3" fill="none" stroke="#757575" stroke-width="1.35"/></svg>
<div class="t" style="top:845.60px;font-size:13px;line-height:20px;color:#d2d2d2;left:736.40px;letter-spacing:0.654px;-webkit-text-stroke:0.45px #d2d2d2;">Szerződés intervalluma</div>
<svg style="position:absolute;left:889.8px;top:849.7px" width="6.4" height="10" viewBox="0 0 7 10"><path d="M1,3.7L3.5,1.2L6,3.7M1,6.3L3.5,8.8L6,6.3" fill="none" stroke="#757575" stroke-width="1.35"/></svg>
<div class="t" style="top:845.60px;font-size:13px;line-height:20px;color:#d2d2d2;left:917.00px;letter-spacing:0.388px;-webkit-text-stroke:0.45px #d2d2d2;">Szerződés kelte</div>
<svg style="position:absolute;left:1019.1999999999999px;top:849.7px" width="6.4" height="10" viewBox="0 0 7 10"><path d="M1,3.7L3.5,1.2L6,3.7M1,6.3L3.5,8.8L6,6.3" fill="none" stroke="#757575" stroke-width="1.35"/></svg>
<div class="t" style="top:845.60px;font-size:13px;line-height:20px;color:#d2d2d2;left:1046.00px;letter-spacing:1.012px;-webkit-text-stroke:0.45px #d2d2d2;">Hatálybalépés dátuma</div>
<svg style="position:absolute;left:1199.5px;top:849.7px" width="6.4" height="10" viewBox="0 0 7 10"><path d="M1,3.7L3.5,1.2L6,3.7M1,6.3L3.5,8.8L6,6.3" fill="none" stroke="#757575" stroke-width="1.35"/></svg>
<div class="t" style="top:845.60px;font-size:13px;line-height:20px;color:#d2d2d2;left:1226.70px;letter-spacing:0.552px;-webkit-text-stroke:0.45px #d2d2d2;">Szerződés lejárata</div>
<svg style="position:absolute;left:1348.2px;top:849.7px" width="6.4" height="10" viewBox="0 0 7 10"><path d="M1,3.7L3.5,1.2L6,3.7M1,6.3L3.5,8.8L6,6.3" fill="none" stroke="#757575" stroke-width="1.35"/></svg>
<div class="t" style="top:845.60px;font-size:13px;line-height:20px;color:#d2d2d2;left:1375.10px;letter-spacing:0.885px;-webkit-text-stroke:0.45px #d2d2d2;">Felmondási idő (nap)</div>
<svg style="position:absolute;left:1518.8000000000002px;top:849.7px" width="6.4" height="10" viewBox="0 0 7 10"><path d="M1,3.7L3.5,1.2L6,3.7M1,6.3L3.5,8.8L6,6.3" fill="none" stroke="#757575" stroke-width="1.35"/></svg>
<div class="t" style="top:845.60px;font-size:13px;line-height:20px;color:#d2d2d2;left:1546.30px;letter-spacing:0.552px;-webkit-text-stroke:0.45px #d2d2d2;">Szerződés bruttó értéke</div>
<svg style="position:absolute;left:1700.9px;top:849.7px" width="6.4" height="10" viewBox="0 0 7 10"><path d="M1,3.7L3.5,1.2L6,3.7M1,6.3L3.5,8.8L6,6.3" fill="none" stroke="#757575" stroke-width="1.35"/></svg>
<div class="t" style="top:845.60px;font-size:13px;line-height:20px;color:#d2d2d2;left:1727.80px;letter-spacing:0.626px;-webkit-text-stroke:0.45px #d2d2d2;">Pénznem</div>
<svg style="position:absolute;left:1791.0px;top:849.7px" width="6.4" height="10" viewBox="0 0 7 10"><path d="M1,3.7L3.5,1.2L6,3.7M1,6.3L3.5,8.8L6,6.3" fill="none" stroke="#757575" stroke-width="1.35"/></svg>
<div class="t" style="left:1817.9px;top:846px;width:18px;overflow:hidden;font-size:13px;line-height:19px;color:#d2d2d2;letter-spacing:.3px;-webkit-text-stroke:.45px #d2d2d2">Me</div>
<div class="t" style="top:889.60px;font-size:13px;line-height:20px;color:#ffffff;left:1689.77px;font-weight:700;">0</div>
<div style="position:absolute;left:0px;top:949px;width:1854px;height:44px;background:#424242"></div>
<div class="t" style="top:963.40px;font-size:10.5px;line-height:16px;color:#ffffff;left:1414.50px;letter-spacing:0.442px;-webkit-text-stroke:0.2px #ffffff;">Oldalankénti tételszám:</div>
<div style="position:absolute;left:1540px;top:955px;width:67px;height:33px;box-sizing:border-box;border:1px solid #929292;border-radius:4.5px"></div>
<div class="t" style="top:963.40px;font-size:10.5px;line-height:16px;color:#ffffff;left:1552.60px;letter-spacing:0.461px;-webkit-text-stroke:0.2px #ffffff;">25</div>
<svg style="position:absolute;left:1581px;top:961.6px" width="20" height="20" viewBox="0 0 24 24"><path d="M7,10L12,15L17,10H7Z" fill="#b8b8b8" /></svg>
<div class="t" style="top:963.40px;font-size:10.5px;line-height:16px;color:#ffffff;left:1635.80px;letter-spacing:-0.322px;-webkit-text-stroke:0.2px #ffffff;">1 - 1 / 1</div>
<svg style="position:absolute;left:1703px;top:961px" width="21" height="21" viewBox="0 0 24 24"><path d="M18.41,16.59L13.82,12L18.41,7.41L17,6L11,12L17,18L18.41,16.59M6,6H8V18H6V6Z" fill="#5f5f5f" /></svg>
<svg style="position:absolute;left:1741px;top:961px" width="21" height="21" viewBox="0 0 24 24"><path d="M15.41,16.58L10.83,12L15.41,7.41L14,6L8,12L14,18L15.41,16.58Z" fill="#5f5f5f" /></svg>
<svg style="position:absolute;left:1779.5px;top:961px" width="21" height="21" viewBox="0 0 24 24"><path d="M8.59,16.58L13.17,12L8.59,7.41L10,6L16,12L10,18L8.59,16.58Z" fill="#5f5f5f" /></svg>
<svg style="position:absolute;left:1818px;top:961px" width="21" height="21" viewBox="0 0 24 24"><path d="M5.59,7.41L10.18,12L5.59,16.59L7,18L13,12L7,6L5.59,7.41M16,6H18V18H16V6Z" fill="#5f5f5f" /></svg>
<div style="position:absolute;left:163px;top:80px;width:34px;height:39px;box-sizing:border-box;border:3px solid #ff0000;border-bottom:none;border-radius:3px 3px 0 0"></div>
<div style="position:absolute;left:164px;top:116px;width:328px;height:173px;box-sizing:border-box;border:3px solid #ff0000;border-radius:4px;background:#424242;box-shadow:0 5px 5px -3px rgba(0,0,0,.2),0 8px 10px 1px rgba(0,0,0,.14),0 3px 14px 2px rgba(0,0,0,.12)"></div>
<svg style="position:absolute;left:176.9px;top:137px" width="17.6" height="17.6" viewBox="0 0 24 24"><path d="M12,4.5C17,4.5 21.27,7.61 23,12C21.27,16.39 17,19.5 12,19.5C7,19.5 2.73,16.39 1,12C2.73,7.61 7,4.5 12,4.5M3.18,12C4.83,15.36 8.24,17.5 12,17.5C15.76,17.5 19.17,15.36 20.82,12C19.17,8.64 15.76,6.5 12,6.5C8.24,6.5 4.83,8.64 3.18,12Z" fill="#fff"/><circle cx="12" cy="12" r="2.6" fill="none" stroke="#fff" stroke-width="1.9"/></svg>
<div class="t" style="top:135.60px;font-size:14px;line-height:21px;color:#ffffff;left:207.60px;letter-spacing:0.596px;-webkit-text-stroke:0.25px #ffffff;">Rekord jogosultságainak beállítása</div>
<svg style="position:absolute;left:178px;top:176px" width="16" height="16" viewBox="0 0 16 16"><path d="M0.6,4.6H15M0.6,8.4H15M0.6,12.2H8.6M11,12.2H15" stroke="#fff" stroke-width="1.7" fill="none"/><path d="M2.4,0.6L14.6,15.4" stroke="#424242" stroke-width="3.4" fill="none"/><path d="M2.6,0.8L14.4,15.2" stroke="#fff" stroke-width="1.4" fill="none"/></svg>
<div class="t" style="top:173.70px;font-size:14px;line-height:21px;color:#ffffff;left:207.60px;letter-spacing:0.567px;-webkit-text-stroke:0.25px #ffffff;">Rekord eltávolítása a legördülő listákból</div>
<svg style="position:absolute;left:176px;top:213px" width="19" height="20" viewBox="0 0 19 20"><path d="M13,3.4H6C4.6,3.4 3.4,4.6 3.4,6V14.6C3.4,16 4.6,17.2 6,17.2H12.6C14,17.2 15.2,16 15.2,14.6V6.4L12.6,3.8" fill="none" stroke="#fff" stroke-width="1.6"/><path d="M4,10.4H14.6" stroke="#fff" stroke-width="1.3" fill="none"/><path d="M6,9.8L8.6,6.8L10.4,9.8Z" fill="#fff"/><path d="M1,0.6L17.6,19" stroke="#424242" stroke-width="3.2" fill="none"/><path d="M1.2,0.8L17.4,18.8" stroke="#1e1e1e" stroke-width="1.4" fill="none"/></svg>
<div class="t" style="top:212.40px;font-size:14px;line-height:21px;color:#ffffff;left:240.20px;letter-spacing:0.241px;-webkit-text-stroke:0.25px #ffffff;">API beállítások</div>
<svg style="position:absolute;left:178px;top:252px" width="16" height="16" viewBox="0 0 16 16"><rect x="1" y="2.6" width="13.6" height="12.4" rx="3.2" fill="none" stroke="#fff" stroke-width="1.6"/><path d="M4.2,6.3H11.4M4.2,9.1H11.4M4.2,11.9H11.4" stroke="#fff" stroke-width="1.45" fill="none"/><path d="M5.4,0.4V2.6M10.2,0.4V2.6" stroke="#fff" stroke-width="1.6" fill="none"/></svg>
<div class="t" style="top:250.40px;font-size:14px;line-height:21px;color:#ffffff;left:207.60px;letter-spacing:0.533px;-webkit-text-stroke:0.25px #ffffff;">Eseménynapló</div>
</body></html>
